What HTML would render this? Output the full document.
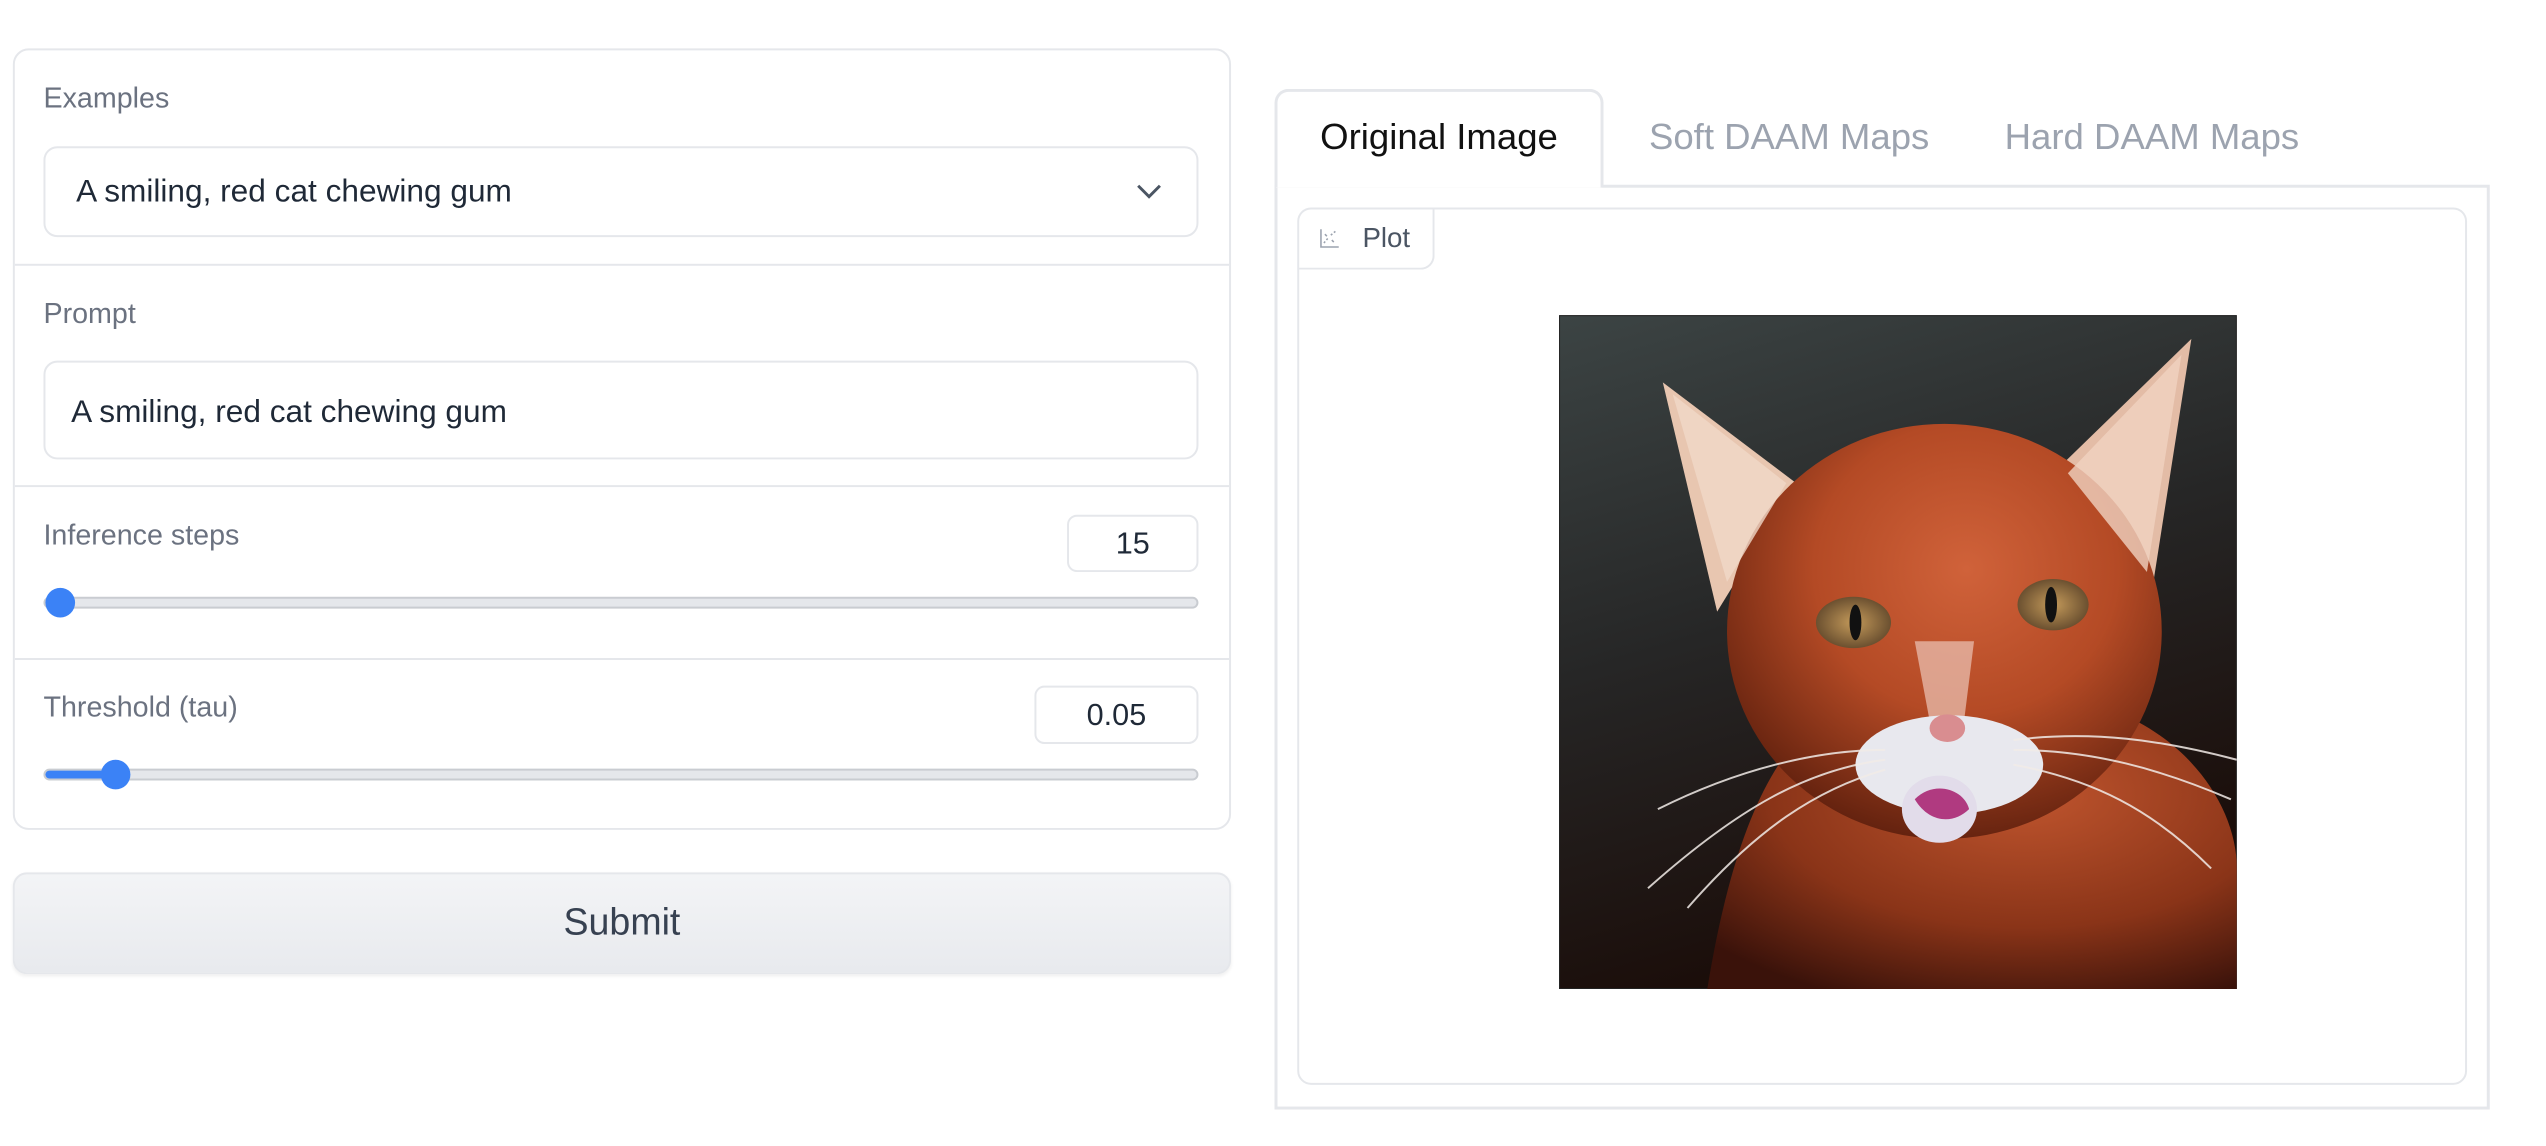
<!DOCTYPE html>
<html><head><meta charset="utf-8">
<style>
*{box-sizing:border-box;margin:0;padding:0}
body{width:2546px;height:1142px;background:#fff;font-family:"Liberation Sans",sans-serif;position:relative;overflow:hidden}
#w{position:absolute;left:0;top:0;width:2580px;height:1160px;transform:scale(0.988);transform-origin:0 0}
.a{position:absolute}
.lbl{color:#6b7280;font-size:29px}
.box{border:2px solid #e5e7eb;border-radius:14px;background:#fff}
.txt{color:#1f2937;font-size:32px}
.div{left:15px;width:1229px;height:2px;background:#e5e7eb}
.track{height:12px;border:2px solid #c9ccd1;background:#e5e7eb;border-radius:8px}
.thumb{width:30px;height:30px;border-radius:50%;background:#3b82f6}
</style></head><body><div id="w">
<div class="a" style="left:13px;top:49px;width:1233px;height:791px;border:2px solid #e5e7eb;border-radius:16px"></div>
<div class="a lbl" style="left:44px;top:84px">Examples</div>
<div class="a box" style="left:44px;top:148px;width:1169px;height:92px"></div>
<div class="a txt" style="left:77px;top:175px">A smiling, red cat chewing gum</div>
<svg class="a" style="left:1148px;top:182px" width="30" height="24" viewBox="0 0 30 24"><path d="M4 6 L15 17 L26 6" fill="none" stroke="#4b5563" stroke-width="3"/></svg>
<div class="a div" style="top:267px"></div>
<div class="a lbl" style="left:44px;top:302px">Prompt</div>
<div class="a box" style="left:44px;top:365px;width:1169px;height:100px"></div>
<div class="a txt" style="left:72px;top:398px">A smiling, red cat chewing gum</div>
<div class="a div" style="top:491px"></div>
<div class="a lbl" style="left:44px;top:526px">Inference steps</div>
<div class="a box" style="left:1080px;top:521px;width:133px;height:58px;border-radius:10px"></div>
<div class="a txt" style="left:1080px;top:532px;width:133px;text-align:center;font-size:31px">15</div>
<div class="a track" style="left:44px;top:604px;width:1169px"></div>
<div class="a thumb" style="left:46px;top:595px"></div>
<div class="a div" style="top:666px"></div>
<div class="a lbl" style="left:44px;top:700px">Threshold (tau)</div>
<div class="a box" style="left:1047px;top:694px;width:166px;height:59px;border-radius:10px"></div>
<div class="a txt" style="left:1047px;top:706px;width:166px;text-align:center;font-size:31px">0.05</div>
<div class="a track" style="left:44px;top:778px;width:1169px"></div>
<div class="a" style="left:46px;top:780px;width:72px;height:8px;background:#3b82f6;border-radius:4px"></div>
<div class="a thumb" style="left:102px;top:769px"></div>
<div class="a" style="left:13px;top:883px;width:1233px;height:103px;border:2px solid #e5e7eb;border-radius:14px;background:linear-gradient(#f3f4f6,#e8eaee);box-shadow:0 2px 3px rgba(0,0,0,.06)"></div>
<div class="a" style="left:13px;top:913px;width:1233px;text-align:center;color:#374151;font-size:38px">Submit</div>

<div class="a" style="left:1290px;top:187px;width:1230px;height:936px;border:3px solid #e5e7eb"></div>
<div class="a" style="left:1290px;top:90px;width:333px;height:100px;border:3px solid #e5e7eb;border-bottom:none;border-radius:14px 14px 0 0;background:#fff"></div>
<div class="a" style="left:1290px;top:118px;width:333px;text-align:center;color:#111;font-size:37px">Original Image</div>
<div class="a" style="left:1669px;top:118px;color:#9ca3af;font-size:37px">Soft DAAM Maps</div>
<div class="a" style="left:2029px;top:118px;color:#9ca3af;font-size:37px">Hard DAAM Maps</div>
<div class="a" style="left:1313px;top:210px;width:1184px;height:888px;border:2px solid #e5e7eb;border-radius:14px"></div>
<div class="a" style="left:1313px;top:210px;width:139px;height:63px;border:2px solid #e5e7eb;border-top:none;border-left:none;border-radius:14px 0 14px 0"></div>
<svg class="a" style="left:1335px;top:230px" width="22" height="22" viewBox="0 0 22 22" fill="none" stroke="#9ca3af" stroke-width="1.6"><path d="M2 2 V20 H20"/><path d="M5 16 L10 10 M12 8 L18 3" stroke-dasharray="2 2"/><path d="M6 7 L8 9 M13 13 L15 15"/></svg>
<div class="a" style="left:1379px;top:225px;color:#4b5563;font-size:28px">Plot</div>

<svg class="a" style="left:1578px;top:319px" width="686" height="682" viewBox="0 0 686 682">
<defs>
<linearGradient id="bg" x1="0" y1="0" x2="0.3" y2="1"><stop offset="0" stop-color="#3c4444"/><stop offset=".5" stop-color="#262626"/><stop offset="1" stop-color="#1a0c08"/></linearGradient>
<radialGradient id="fur" cx=".55" cy=".35" r=".7"><stop offset="0" stop-color="#d0623a"/><stop offset=".5" stop-color="#b44a25"/><stop offset="1" stop-color="#5a1d0c"/></radialGradient>
<radialGradient id="body" cx=".6" cy=".3" r=".8"><stop offset="0" stop-color="#c0552e"/><stop offset=".6" stop-color="#8a3418"/><stop offset="1" stop-color="#3a120a"/></radialGradient>
<radialGradient id="eye" cx=".5" cy=".5" r=".5"><stop offset="0" stop-color="#c49a5a"/><stop offset="1" stop-color="#6b5030"/></radialGradient>
</defs>
<rect width="686" height="682" fill="url(#bg)" stroke="#222" stroke-width="2"/>
<path d="M150 682 C170 560 200 470 250 420 L560 400 C640 430 686 500 686 560 L686 682 Z" fill="url(#body)"/>
<path d="M105 68 L240 170 L160 300 Z" fill="#e8c6b0"/>
<path d="M640 24 L500 160 L600 280 Z" fill="#e3bca6"/>
<ellipse cx="390" cy="320" rx="220" ry="210" fill="url(#fur)"/>
<path d="M115 80 L230 170 L170 270 Z" fill="#f0d8c8" opacity=".8"/>
<path d="M630 40 L515 160 L595 260 Z" fill="#f0d2c0" opacity=".8"/>
<ellipse cx="298" cy="311" rx="38" ry="26" fill="url(#eye)"/>
<ellipse cx="500" cy="293" rx="36" ry="26" fill="url(#eye)"/>
<ellipse cx="300" cy="311" rx="6" ry="18" fill="#111"/>
<ellipse cx="498" cy="293" rx="6" ry="18" fill="#111"/>
<path d="M360 330 L420 330 L410 410 L375 410 Z" fill="#e6b6a6" opacity=".8"/>
<ellipse cx="395" cy="455" rx="95" ry="50" fill="#e8e8ee"/>
<ellipse cx="393" cy="418" rx="18" ry="14" fill="#d98d90"/>
<ellipse cx="385" cy="500" rx="38" ry="34" fill="#e2dcea"/>
<path d="M360 490 C380 470 410 480 415 500 C400 515 375 515 360 490 Z" fill="#b03a80"/>
<g stroke="#f2ece8" stroke-width="2" fill="none" opacity=".85">
<path d="M330 450 C250 460 180 500 90 580"/><path d="M330 460 C260 480 200 520 130 600"/><path d="M330 440 C260 440 180 460 100 500"/>
<path d="M460 440 C540 440 610 460 680 490"/><path d="M460 455 C540 470 600 500 660 560"/><path d="M460 430 C540 420 610 430 686 450"/>
</g>
</svg>
</div></body></html>
